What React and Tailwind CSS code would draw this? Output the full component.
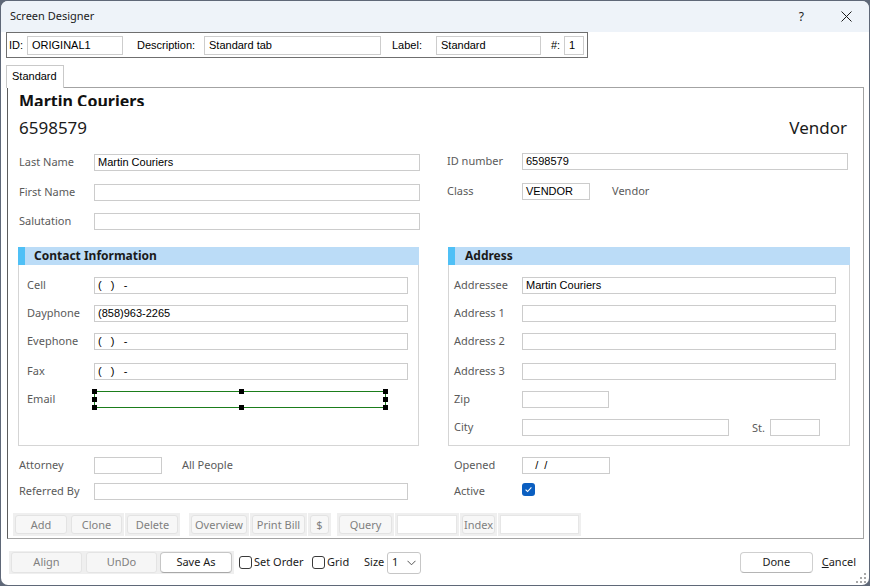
import React from "react";

const Inp = ({ className = "", children }) => (
  <div
    className={`h-[17px] shrink-0 border border-[#cccccc] bg-white pl-[3px] font-['Liberation_Sans',Arial,sans-serif] text-[11px] leading-[15px] text-black whitespace-pre overflow-hidden ${className}`}
  >
    {children}
  </div>
);

const Lbl = ({ className = "", children }) => (
  <div className={`shrink-0 text-[11px] leading-[15px] text-[#5a5a5a] mb-[2px] ${className}`}>{children}</div>
);

const Row = ({ className = "", children }) => (
  <div className={`flex items-center h-[17px] shrink-0 ${className}`}>{children}</div>
);

const Section = ({ title, className = "", titleClass = "", children }) => (
  <div className={`h-[199px] shrink-0 border border-[#d5d5d5] flex flex-col ${className}`}>
    <div className="-mx-px -mt-px h-[18px] bg-[#bbdcf7] flex items-center shrink-0">
      <div className="w-[7px] h-full bg-[#4fc0f6]" />
      <div className={`text-[12px] font-bold text-[#1a1a1a] leading-[18px] ${titleClass}`}>{title}</div>
    </div>
    {children}
  </div>
);

const HInput = ({ className = "", children }) => (
  <div className={`h-[19px] shrink-0 border border-[#cdcdcd] bg-white pl-[4px] leading-[17px] whitespace-pre ${className}`}>
    {children}
  </div>
);

const DBtn = ({ className = "", children }) => (
  <div className={`h-[23px] shrink-0 bg-[#efefef] p-[2px] ${className}`}>
    <div className="h-full rounded-[3px] bg-[#f7f7f7] border border-[#e3e3e3] flex items-center justify-center text-[11px] text-[#808080] leading-none">
      {children}
    </div>
  </div>
);

const DInp = ({ className = "" }) => (
  <div className={`h-[23px] shrink-0 bg-[#efefef] p-[2px] ${className}`}>
    <div className="h-full bg-white border border-[#e6e6e6]" />
  </div>
);

const Handle = ({ className }) => <div className={`absolute w-[5px] h-[5px] bg-black ${className}`} />;

const Check = ({ className = "" }) => (
  <div className={`w-[13px] h-[13px] shrink-0 rounded-[3px] border border-[#3a3a3a] bg-white ${className}`} />
);

export default function App() {
  return (
    <div className="w-[870px] h-[586px] bg-[#5f6878] overflow-hidden">
      <div className="relative m-px w-[868px] h-[584px] rounded-[7px] overflow-hidden bg-white flex flex-col font-['Noto_Sans',sans-serif]">
        {/* Title bar */}
        <div className="h-[31px] shrink-0 bg-[#eef3f9] flex items-center pl-[9px] pr-[17px]">
          <span className="text-[11px] text-[#1b1b1b]">Screen Designer</span>
          <span className="ml-auto mr-[37px] text-[12px] text-[#1b1b1b]">?</span>
          <svg width="11" height="11" viewBox="0 0 11 11">
            <path d="M0.5 0.5 L10.5 10.5 M10.5 0.5 L0.5 10.5" stroke="#1b1b1b" strokeWidth="1" fill="none" />
          </svg>
        </div>

        {/* Header row */}
        <div className="ml-[5px] w-[582px] h-[26px] shrink-0 border border-[#6f6f6f] flex items-center font-['Liberation_Sans',Arial,sans-serif] text-[11px] text-black">
          <span className="w-[20px] pl-[2px] shrink-0">ID:</span>
          <HInput className="w-[96px]">ORIGINAL1</HInput>
          <span className="ml-[14px] w-[67px] shrink-0">Description:</span>
          <HInput className="w-[177px]">Standard tab</HInput>
          <span className="ml-[11px] w-[44px] shrink-0">Label:</span>
          <HInput className="w-[105px]">Standard</HInput>
          <span className="ml-[10px] w-[13px] shrink-0">#:</span>
          <HInput className="w-[20px] pl-[3px]">1</HInput>
        </div>

        {/* Tab */}
        <div className="ml-[5px] mt-[7px] relative z-10 w-[58px] h-[23px] shrink-0 border border-b-0 border-[#c9c9c9] bg-white pl-[5px] font-['Liberation_Sans',Arial,sans-serif] text-[11px] leading-[21px] text-black">
          Standard
        </div>

        {/* Panel */}
        <div className="ml-[6px] -mt-px w-[857px] h-[452px] shrink-0 border border-[#a3a3a3] border-l-[#5c5c5c] flex flex-col">
          <div className="ml-[11px] h-[18px] overflow-hidden shrink-0">
            <div className="mt-[2px] text-[16px] font-bold leading-[22px] text-[#111]">Martin Couriers</div>
          </div>
          <div className="ml-[11px] mr-[16px] mt-[10px] flex justify-between text-[17px] leading-[24px] text-[#1a1a1a] shrink-0">
            <span>6598579</span>
            <span>Vendor</span>
          </div>

          <div className="mt-[13px] flex items-start shrink-0">
            {/* Left column */}
            <div className="ml-[10px] w-[402px] flex flex-col shrink-0">
              <Row className="mt-[1px]">
                <Lbl className="w-[76px] pl-[1px]">Last Name</Lbl>
                <Inp className="w-[326px]">Martin Couriers</Inp>
              </Row>
              <Row className="mt-[13px]">
                <Lbl className="w-[76px] pl-[1px]">First Name</Lbl>
                <Inp className="w-[326px]" />
              </Row>
              <Row className="mt-[12px]">
                <Lbl className="w-[76px] pl-[1px]">Salutation</Lbl>
                <Inp className="w-[326px]" />
              </Row>

              <Section title="Contact Information" className="mt-[17px] w-[401px]" titleClass="ml-[9px]">
                <Row className="mt-[12px]">
                  <Lbl className="w-[75px] pl-[8px]">Cell</Lbl>
                  <Inp className="w-[314px]">{"(   )   -"}</Inp>
                </Row>
                <Row className="mt-[11px]">
                  <Lbl className="w-[75px] pl-[8px]">Dayphone</Lbl>
                  <Inp className="w-[314px]">(858)963-2265</Inp>
                </Row>
                <Row className="mt-[11px]">
                  <Lbl className="w-[75px] pl-[8px]">Evephone</Lbl>
                  <Inp className="w-[314px]">{"(   )   -"}</Inp>
                </Row>
                <Row className="mt-[13px]">
                  <Lbl className="w-[75px] pl-[8px]">Fax</Lbl>
                  <Inp className="w-[314px]">{"(   )   -"}</Inp>
                </Row>
                <Row className="mt-[11px]">
                  <Lbl className="w-[75px] pl-[8px]">Email</Lbl>
                  <div className="relative w-[292px] h-[17px] shrink-0 border border-[#1b7d1b]">
                    <Handle className="left-[-3px] top-[-3px]" />
                    <Handle className="left-[144px] top-[-3px]" />
                    <Handle className="right-[-3px] top-[-3px]" />
                    <Handle className="left-[-3px] top-[5px]" />
                    <Handle className="right-[-3px] top-[5px]" />
                    <Handle className="left-[-3px] bottom-[-3px]" />
                    <Handle className="left-[144px] bottom-[-3px]" />
                    <Handle className="right-[-3px] bottom-[-3px]" />
                  </div>
                </Row>
              </Section>

              <Row className="mt-[11px]">
                <Lbl className="w-[76px] pl-[1px]">Attorney</Lbl>
                <Inp className="w-[68px]" />
                <Lbl className="ml-[20px]">All People</Lbl>
              </Row>
              <Row className="mt-[9px]">
                <Lbl className="w-[76px] pl-[1px]">Referred By</Lbl>
                <Inp className="w-[314px]" />
              </Row>
            </div>

            {/* Right column */}
            <div className="ml-[26px] w-[404px] flex flex-col shrink-0">
              <Row>
                <Lbl className="w-[76px] pl-[1px]">ID number</Lbl>
                <Inp className="w-[326px]">6598579</Inp>
              </Row>
              <Row className="mt-[13px]">
                <Lbl className="w-[76px] pl-[1px]">Class</Lbl>
                <Inp className="w-[68px]">VENDOR</Inp>
                <Lbl className="ml-[22px]">Vendor</Lbl>
              </Row>

              <Section title="Address" className="mt-[47px] ml-[2px] w-[402px]" titleClass="ml-[10px]">
                <Row className="mt-[12px]">
                  <Lbl className="w-[73px] pl-[5px]">Addressee</Lbl>
                  <Inp className="w-[314px]">Martin Couriers</Inp>
                </Row>
                <Row className="mt-[11px]">
                  <Lbl className="w-[73px] pl-[5px]">Address 1</Lbl>
                  <Inp className="w-[314px]" />
                </Row>
                <Row className="mt-[11px]">
                  <Lbl className="w-[73px] pl-[5px]">Address 2</Lbl>
                  <Inp className="w-[314px]" />
                </Row>
                <Row className="mt-[13px]">
                  <Lbl className="w-[73px] pl-[5px]">Address 3</Lbl>
                  <Inp className="w-[314px]" />
                </Row>
                <Row className="mt-[11px]">
                  <Lbl className="w-[73px] pl-[5px]">Zip</Lbl>
                  <Inp className="w-[87px]" />
                </Row>
                <Row className="mt-[11px]">
                  <Lbl className="w-[73px] pl-[5px]">City</Lbl>
                  <Inp className="w-[207px]" />
                  <Lbl className="ml-[23px] w-[18px] mb-0 mt-[2px]">St.</Lbl>
                  <Inp className="w-[50px]" />
                </Row>
              </Section>

              <Row className="mt-[11px]">
                <Lbl className="w-[76px] pl-[8px]">Opened</Lbl>
                <Inp className="w-[88px]">{"   /  /"}</Inp>
              </Row>
              <Row className="mt-[9px]">
                <Lbl className="w-[76px] pl-[8px]">Active</Lbl>
                <div className="w-[13px] h-[13px] self-start shrink-0 rounded-[3px] bg-[#0b5fc1] flex items-center justify-center">
                  <svg width="9" height="9" viewBox="0 0 9 9">
                    <path d="M1.6 4.6 L3.6 6.5 L7.4 2.4" stroke="white" strokeWidth="1.1" fill="none" />
                  </svg>
                </div>
              </Row>
            </div>
          </div>

          {/* Button row */}
          <div className="mt-[13px] ml-[5px] flex h-[23px] shrink-0">
            <DBtn className="w-[56px]">Add</DBtn>
            <DBtn className="w-[55px]">Clone</DBtn>
            <DBtn className="ml-[1px] w-[55px]">Delete</DBtn>
            <DBtn className="ml-[9px] w-[60px]">Overview</DBtn>
            <DBtn className="ml-[1px] w-[57px]">Print Bill</DBtn>
            <DBtn className="ml-[1px] w-[23px]">$</DBtn>
            <DBtn className="ml-[6px] w-[57px]">Query</DBtn>
            <DInp className="ml-[1px] w-[64px]" />
            <DBtn className="ml-[1px] w-[37px]">Index</DBtn>
            <DInp className="ml-[1px] w-[83px]" />
          </div>
        </div>

        {/* Footer */}
        <div className="mt-[12px] ml-[8px] mr-[13px] flex items-center h-[23px] shrink-0 text-[11px]">
          <div className="h-[23px] w-[225px] shrink-0 bg-[#efefef] flex items-center pl-[2px]">
            <div className="w-[71px] h-[21px] rounded-[3px] bg-[#f6f6f6] border border-[#e4e4e4] flex items-center justify-center text-[#808080]">
              Align
            </div>
            <div className="ml-[4px] w-[71px] h-[21px] rounded-[3px] bg-[#f6f6f6] border border-[#e4e4e4] flex items-center justify-center text-[#808080]">
              UnDo
            </div>
            <div className="ml-[3px] w-[72px] h-[21px] rounded-[4px] bg-white border border-[#c6c6c6] border-b-[#a8a8a8] flex items-center justify-center text-[#1a1a1a]">
              Save As
            </div>
          </div>
          <div className="ml-[5px] w-[73px] flex items-center shrink-0">
            <Check />
            <span className="ml-[2px] text-[#1a1a1a]">Set Order</span>
          </div>
          <div className="w-[52px] flex items-center shrink-0">
            <Check />
            <span className="ml-[2px] text-[#1a1a1a]">Grid</span>
          </div>
          <span className="w-[23px] shrink-0 text-[#1a1a1a]">Size</span>
          <div className="w-[34px] h-[22px] shrink-0 rounded-[3px] border border-[#c6c6c6] bg-white flex items-center pl-[4px] pr-[4px] justify-between text-[#1a1a1a]">
            <span>1</span>
            <svg width="9" height="6" viewBox="0 0 9 6">
              <path d="M0.5 0.8 L4.5 4.8 L8.5 0.8" stroke="#555" strokeWidth="1" fill="none" />
            </svg>
          </div>
          <div className="ml-auto w-[73px] h-[21px] shrink-0 rounded-[4px] bg-white border border-[#cfcfcf] border-b-[#b5b5b5] flex items-center justify-center text-[#1a1a1a]">
            Done
          </div>
          <span className="ml-[9px] text-[#1a1a1a]">
            <span className="underline">C</span>ancel
          </span>
        </div>

        {/* Resize grip */}
        <svg className="absolute right-[3px] bottom-[2px]" width="10" height="10" viewBox="0 0 10 10">
          <rect x="8" y="0" width="2" height="2" fill="#a8a8a8" />
          <rect x="4" y="4" width="2" height="2" fill="#a8a8a8" />
          <rect x="8" y="4" width="2" height="2" fill="#a8a8a8" />
          <rect x="0" y="8" width="2" height="2" fill="#a8a8a8" />
          <rect x="4" y="8" width="2" height="2" fill="#a8a8a8" />
          <rect x="8" y="8" width="2" height="2" fill="#a8a8a8" />
        </svg>
      </div>
    </div>
  );
}
